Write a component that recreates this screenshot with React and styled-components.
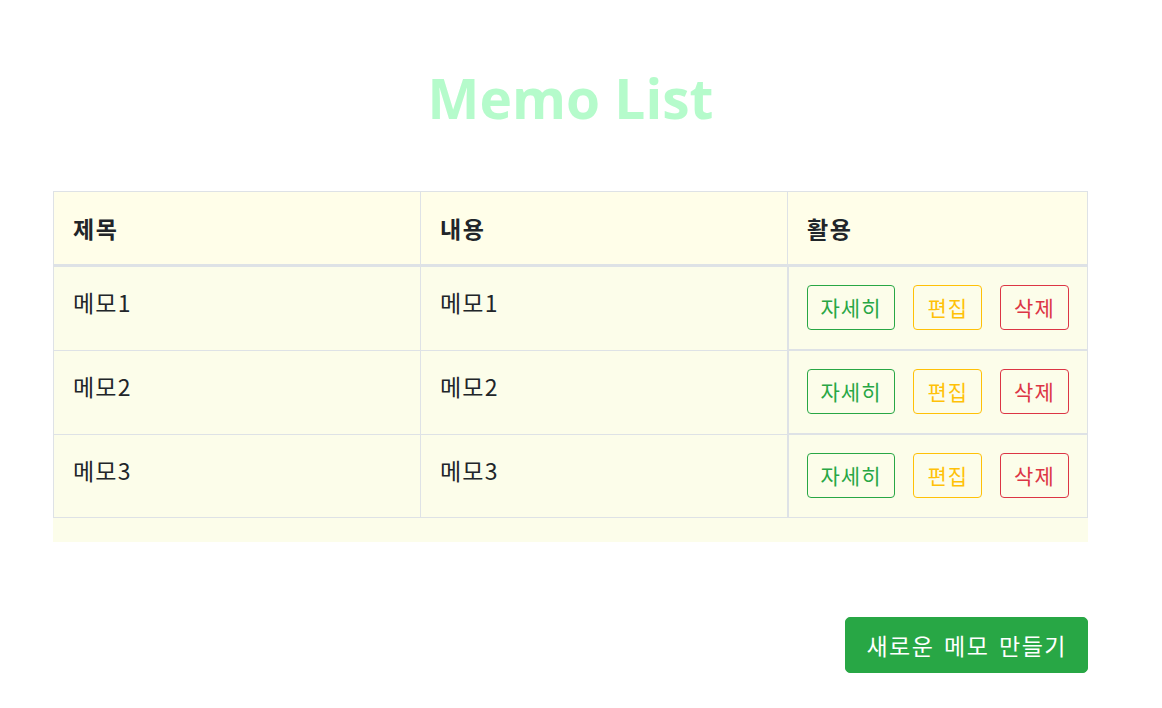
import React from "react";
import styled, { createGlobalStyle } from "styled-components";

const memos = [
   { id: 1, title: "메모1", content: "메모1" },
   { id: 2, title: "메모2", content: "메모2" },
   { id: 3, title: "메모3", content: "메모3" },
];

export default function App() {
   return (
      <>
         <GlobalStyle />
         <Wrapper>
            <Title>Memo List</Title>
            <TableBox>
               <Table>
                  <thead>
                     <tr>
                        <HeadCell>제목</HeadCell>
                        <HeadCell>내용</HeadCell>
                        <HeadCell $last>활용</HeadCell>
                     </tr>
                  </thead>
                  <tbody>
                     {memos.map((memo) => (
                        <tr key={memo.id}>
                           <BodyCell>{memo.title}</BodyCell>
                           <BodyCell>{memo.content}</BodyCell>
                           <ActionCell>
                              <Actions>
                                 <OutlineButton $color="#28a745">자세히</OutlineButton>
                                 <OutlineButton $color="#ffc107">편집</OutlineButton>
                                 <OutlineButton $color="#dc3545">삭제</OutlineButton>
                              </Actions>
                           </ActionCell>
                        </tr>
                     ))}
                  </tbody>
               </Table>
            </TableBox>
            <Footer>
               <CreateButton>새로운 메모 만들기</CreateButton>
            </Footer>
         </Wrapper>
      </>
   );
}

const GlobalStyle = createGlobalStyle`
   * {
      box-sizing: border-box;
   }
   body {
      margin: 0;
      background: #ffffff;
      color: #212529;
      font-family: "Noto Sans CJK KR", "Noto Sans", sans-serif;
   }
`;

const Wrapper = styled.div`
   width: 1035px;
   margin-left: 53px;
   padding-top: 64px;
`;

const Title = styled.h1`
   margin: 0 0 59px;
   text-align: center;
   font-family: "Open Sans", "Noto Sans", sans-serif;
   font-size: 55px;
   font-weight: 700;
   line-height: 68px;
   color: #b5fbcb;
`;

const TableBox = styled.div`
   background-color: #fcfdea;
   padding-bottom: 24px;
`;

const Table = styled.table`
   width: 100%;
   border-collapse: collapse;
   table-layout: fixed;
   border: 1px solid #dee2e6;
`;

const HeadCell = styled.th`
   width: ${(p) => (p.$last ? "300px" : "367px")};
   padding: 20px 19px;
   text-align: left;
   font-size: 23px;
   font-weight: 700;
   letter-spacing: 1.5px;
   line-height: 32px;
   background-color: #fffee9;
   border: 1px solid #dee2e6;
   border-bottom: 3px solid #dee2e6;
`;

const BodyCell = styled.td`
   padding: 19px 19px 30px;
   vertical-align: top;
   font-size: 23px;
   font-weight: 400;
   letter-spacing: 1.2px;
   line-height: 32px;
   border: 1px solid #dee2e6;
`;

const ActionCell = styled(BodyCell)`
   padding: 18px 18px 19px;
   border-left: 2px solid #dee2e6;
   border-top: 2px solid #dee2e6;
`;

const Actions = styled.div`
   display: flex;
   gap: 18px;
`;

const OutlineButton = styled.button`
   height: 45px;
   padding: 0 13px;
   font-family: "Noto Sans CJK KR", sans-serif;
   font-size: 21px;
   font-weight: 400;
   letter-spacing: 1px;
   line-height: 1;
   color: ${(p) => p.$color};
   background: transparent;
   border: 1px solid ${(p) => p.$color};
   border-radius: 4px;
   cursor: pointer;
`;

const Footer = styled.div`
   display: flex;
   justify-content: flex-end;
   margin-top: 75px;
`;

const CreateButton = styled.button`
   height: 56px;
   padding: 0 20px;
   font-family: "Noto Sans CJK KR", sans-serif;
   font-size: 23px;
   letter-spacing: 1.5px;
   word-spacing: 3px;
   line-height: 1;
   color: #ffffff;
   background-color: #28a745;
   border: 1px solid #28a745;
   border-radius: 5px;
   cursor: pointer;
`;
